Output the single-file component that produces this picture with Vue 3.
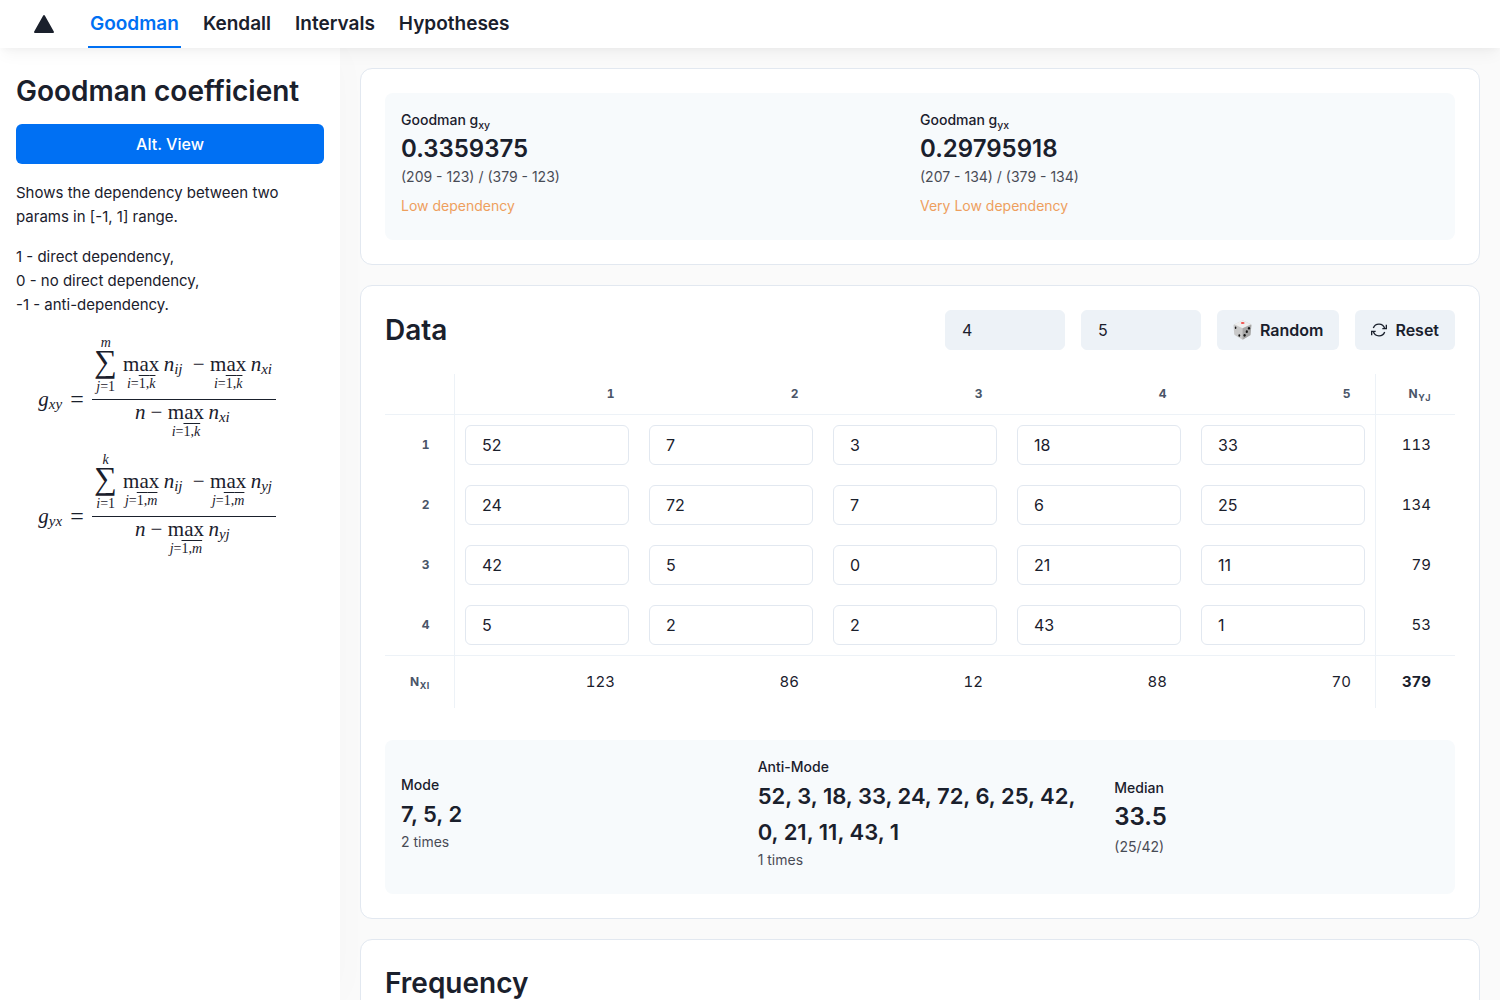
<script setup>
import { computed, ref } from 'vue'

const links = ['Goodman', 'Kendall', 'Intervals', 'Hypotheses']
const active = ref('Goodman')

const formulas = [
  { sub: 'xy', top: 'm', sumVar: 'j', limVar: 'i', limTo: 'k', last: 'xi' },
  { sub: 'yx', top: 'k', sumVar: 'i', limVar: 'j', limTo: 'm', last: 'yj' },
]

const rowCount = ref(4)
const colCount = ref(5)
const cells = ref([
  [52, 7, 3, 18, 33],
  [24, 72, 7, 6, 25],
  [42, 5, 0, 21, 11],
  [5, 2, 2, 43, 1],
])

const sum = (list) => list.reduce((a, b) => a + Number(b), 0)
const rowSums = computed(() => cells.value.map(sum))
const colSums = computed(() => cells.value[0].map((_, c) => sum(cells.value.map((r) => r[c]))))
const total = computed(() => sum(rowSums.value))

const coefficients = [
  { sub: 'xy', value: '0.3359375', calc: '(209 - 123) / (379 - 123)', note: 'Low dependency' },
  { sub: 'yx', value: '0.29795918', calc: '(207 - 134) / (379 - 134)', note: 'Very Low dependency' },
]
</script>

<template>
  <div class="app">
    <header class="topbar">
      <a class="logo" href="#" aria-label="Home">
        <svg width="20" height="18" viewBox="0 0 20 18" aria-hidden="true">
          <path d="M9.200.600a.9.900 0 0 1 1.600 0l9 16c.4.700 0 1.400-.8 1.400H1c-.8 0-1.200-.7-.8-1.400z" fill="currentColor" />
        </svg>
      </a>
      <nav class="nav">
        <a v-for="l in links" :key="l" href="#" class="nav-link" :class="{ active: l === active }" @click.prevent="active = l">{{ l }}</a>
      </nav>
    </header>

    <div class="body">
      <aside class="sidebar">
        <h1 class="title">Goodman coefficient</h1>
        <button class="btn primary" type="button">Alt. View</button>
        <div class="about">
          <p>Shows the dependency between two params in [-1, 1] range.</p>
          <p>1 - direct dependency,<br />0 - no direct dependency,<br />-1 - anti-dependency.</p>
        </div>

        <div class="formulas">
          <div v-for="f in formulas" :key="f.sub" class="formula">
            <div class="lhs"><i>g</i><sub><i>{{ f.sub }}</i></sub></div>
            <div class="eq">=</div>
            <div class="fraction">
              <div class="part numerator">
                <div class="sum">
                  <i class="limit upper">{{ f.top }}</i>
                  <span class="sigma">∑</span>
                  <span class="limit"><i>{{ f.sumVar }}</i>=1</span>
                </div>
                <div class="max"><span>max</span><span class="limit"><i>{{ f.limVar }}</i>=<span class="over">1,<i>{{ f.limTo }}</i></span></span></div>
                <div class="term"><i>n</i><sub><i>ij</i></sub></div>
                <div class="minus">−</div>
                <div class="max"><span>max</span><span class="limit"><i>{{ f.limVar }}</i>=<span class="over">1,<i>{{ f.limTo }}</i></span></span></div>
                <div class="term"><i>n</i><sub><i>{{ f.last }}</i></sub></div>
              </div>
              <div class="part denominator">
                <i>n</i>
                <div class="minus">−</div>
                <div class="max"><span>max</span><span class="limit"><i>{{ f.limVar }}</i>=<span class="over">1,<i>{{ f.limTo }}</i></span></span></div>
                <div class="term"><i>n</i><sub><i>{{ f.last }}</i></sub></div>
              </div>
            </div>
          </div>
        </div>
      </aside>

      <main class="main">
        <section class="card">
          <div class="panel pair">
            <div v-for="c in coefficients" :key="c.sub" class="stat">
              <div class="label">Goodman g<sub>{{ c.sub }}</sub></div>
              <div class="value">{{ c.value }}</div>
              <div class="help">{{ c.calc }}</div>
              <div class="help warn">{{ c.note }}</div>
            </div>
          </div>
        </section>

        <section class="card">
          <div class="card-head">
            <h2 class="title">Data</h2>
            <div class="controls">
              <input v-model="rowCount" class="filled" type="text" inputmode="numeric" aria-label="Rows" />
              <input v-model="colCount" class="filled" type="text" inputmode="numeric" aria-label="Columns" />
              <button class="btn" type="button">
                <svg width="19" height="20" viewBox="0 0 19 20" aria-hidden="true">
                  <path d="M1.5 4.2 9 .7q.8-.3 1.6 0l7 3.3q.9.5.8 1.4l-.9 9q-.1.8-.8 1.2l-6.3 3.7q-.8.5-1.6 0l-6.8-4.1q-.7-.5-.8-1.3L.5 5.600q0-1 1-1.400z" fill="#c9c9c9" />
                  <path d="M1.2 4.3 9 .7q.8-.3 1.6 0l7.2 3.500L9.600 8.200z" fill="#eeeeee" />
                  <path d="m18.4 4.8-.9 9.600q-.1.8-.8 1.200L10.400 19.300q-.4.2-.8.2V8.200z" fill="#a6a6a6" />
                  <ellipse cx="9.700" cy="3" rx="1.900" ry="1" fill="#f0504c" />
                  <g fill="#151515">
                    <ellipse cx="2.600" cy="7.700" rx=".8" ry="1.200" />
                    <ellipse cx="6.300" cy="15.500" rx=".9" ry="1.300" />
                    <ellipse cx="16" cy="8.300" rx="1.100" ry="1.400" />
                    <ellipse cx="13.800" cy="11.700" rx="1.100" ry="1.400" />
                    <ellipse cx="11.600" cy="15.300" rx="1.100" ry="1.400" />
                  </g>
                </svg>
                Random
              </button>
              <button class="btn" type="button">
                <svg width="16" height="16" viewBox="0 0 24 24" fill="none" stroke="currentColor" stroke-width="2" aria-hidden="true">
                  <path d="M23 4v6h-6M1 20v-6h6" />
                  <path d="M3.500 9A9 9 0 0 1 20.500 9.500M3.500 14.500A9 9 0 0 0 20.500 15" />
                </svg>
                Reset
              </button>
            </div>
          </div>

          <table class="grid">
            <colgroup>
              <col class="col-head" />
              <col v-for="c in 5" :key="c" />
              <col class="col-total" />
            </colgroup>
            <thead>
              <tr>
                <th></th>
                <th v-for="c in 5" :key="c" scope="col">{{ c }}</th>
                <th scope="col">N<sub>yj</sub></th>
              </tr>
            </thead>
            <tbody>
              <tr v-for="(row, r) in cells" :key="r">
                <th scope="row">{{ r + 1 }}</th>
                <td v-for="(_, c) in row" :key="c" class="cell">
                  <input v-model="cells[r][c]" type="text" inputmode="numeric" :aria-label="`Row ${r + 1}, column ${c + 1}`" />
                </td>
                <td>{{ rowSums[r] }}</td>
              </tr>
            </tbody>
            <tfoot>
              <tr>
                <th scope="row">N<sub>xi</sub></th>
                <td v-for="(s, c) in colSums" :key="c">{{ s }}</td>
                <td class="total">{{ total }}</td>
              </tr>
            </tfoot>
          </table>

          <div class="panel triple">
            <div class="stat">
              <div class="label">Mode</div>
              <div class="value list">7, 5, 2</div>
              <div class="help">2 times</div>
            </div>
            <div class="stat">
              <div class="label">Anti-Mode</div>
              <div class="value list">52, 3, 18, 33, 24, 72, 6, 25, 42, 0, 21, 11, 43, 1</div>
              <div class="help">1 times</div>
            </div>
            <div class="stat median">
              <div class="label">Median</div>
              <div class="value">33.5</div>
              <div class="help">(25/42)</div>
            </div>
          </div>
        </section>

        <section class="card">
          <h2 class="title">Frequency</h2>
        </section>
      </main>
    </div>
  </div>
</template>

<style>
body {
  margin: 0;
  background: #fafafa;
}
</style>

<style scoped>
* {
  box-sizing: border-box;
}

.app {
  display: flex;
  flex-direction: column;
  height: 100vh;
  color: #1a202c;
  font: 16px/24px Inter, "Liberation Sans", sans-serif;
}

.topbar {
  position: relative;
  z-index: 2;
  display: flex;
  flex: none;
  gap: 32px;
  height: 48px;
  padding-left: 34px;
  background: #fff;
  box-shadow: 0 10px 15px -3px rgba(0, 0, 0, 0.04), 0 4px 6px -2px rgba(0, 0, 0, 0.03);
}

.logo {
  display: flex;
  align-items: center;
  width: 22px;
  color: #1a202c;
}

.nav {
  display: flex;
  gap: 20px;
}

.nav-link {
  padding: 0 2px;
  border-bottom: 2px solid transparent;
  color: inherit;
  font-size: 19px;
  font-weight: 600;
  line-height: 48px;
  text-decoration: none;
}

.nav-link.active {
  border-color: #0070f3;
  color: #0070f3;
}

.body {
  display: flex;
  flex: 1;
  min-height: 0;
}

.sidebar {
  flex: none;
  width: 340px;
  padding: 24px 16px;
  background: #fff;
  box-shadow: 0 0 40px rgba(0, 0, 0, 0.02);
}

.about {
  display: grid;
  gap: 16px;
  padding-top: 17px;
  font-size: 15px;
}

.about p {
  margin: 0;
}

.title {
  margin: 0;
  font-size: 28px;
  font-weight: 600;
  line-height: 38px;
}

.btn {
  display: flex;
  align-items: center;
  justify-content: center;
  gap: 8px;
  height: 40px;
  padding: 0 16px 1px;
  border: 0;
  border-radius: 6px;
  background: #edf2f7;
  color: inherit;
  font: inherit;
  font-weight: 600;
}

.btn.primary {
  width: 100%;
  margin-top: 14px;
  background: #0070f3;
  color: #fff;
  font-weight: 500;
}

.main {
  display: flex;
  flex: 1;
  flex-direction: column;
  gap: 20px;
  min-width: 0;
  padding: 20px;
  overflow-y: auto;
  scrollbar-width: none;
}

.card {
  flex: none;
  padding: 24px;
  border: 1px solid #e2e8f0;
  border-radius: 12px;
  background: #fff;
}

.panel {
  display: grid;
  align-items: center;
  border-radius: 8px;
  background: #f7fafc;
}

.pair {
  grid-template-columns: 1fr 1fr;
  padding: 16px;
}

.triple {
  grid-template-columns: 1fr 1fr 1fr;
  margin-top: 32px;
}

.triple .stat {
  padding: 16px;
}

.label {
  font-size: 14px;
  font-weight: 500;
  line-height: 22px;
}

sub {
  font-size: 75%;
  line-height: 0;
}

.value {
  font-size: 24px;
  font-weight: 600;
  line-height: 36px;
}

.value.list {
  font-size: 22px;
}

.help {
  margin-bottom: 8px;
  font-size: 14px;
  line-height: 20px;
  opacity: 0.8;
}

.help.warn {
  margin: 9px 0 8px;
  color: #ed8936;
}

.median .help {
  margin: 2px 0 0;
}

.card-head {
  display: flex;
  align-items: center;
  justify-content: space-between;
}

.controls {
  display: flex;
  gap: 16px;
}

input {
  width: 100%;
  height: 40px;
  padding: 0 16px;
  border: 1px solid #e2e8f0;
  border-radius: 6px;
  background: #fff;
  color: inherit;
  font: 16px/24px Inter, "Liberation Sans", sans-serif;
}

.filled {
  width: 120px;
  border-color: #edf2f7;
  background: #edf2f7;
}

.grid {
  width: 100%;
  margin-top: 24px;
  border-collapse: separate;
  border-spacing: 0;
  table-layout: fixed;
  font-variant-numeric: lining-nums tabular-nums;
}

.col-head {
  width: 70px;
}

.col-total {
  width: 80px;
}

.grid th,
.grid td {
  height: 60px;
  padding: 0 24px;
  font-size: 15px;
  text-align: right;
}

.grid th {
  color: #4a5568;
  font-size: 12px;
  font-weight: 700;
  letter-spacing: 0.05em;
  line-height: 16px;
  text-transform: uppercase;
}

.grid thead th {
  height: 41px;
  border-bottom: 1px solid #edf2f7;
}

.grid th:first-child {
  border-right: 1px solid #edf2f7;
}

.grid tr > :last-child {
  border-left: 1px solid #edf2f7;
}

.grid tbody tr:last-child > * {
  height: 61px;
  border-bottom: 1px solid #edf2f7;
}

.grid tfoot th,
.grid tfoot td {
  height: 52px;
}

.grid .cell {
  padding: 0 10px;
}

.grid .total {
  font-weight: 700;
}

.formulas {
  display: flex;
  flex-direction: column;
  gap: 16px;
  margin-top: 21px;
}

.formula {
  display: flex;
  align-items: center;
  justify-content: center;
  width: 282px;
  font: 21px/20px "Liberation Serif", serif;
}

.formula sub {
  font-size: 15px;
  vertical-align: -3px;
}

.lhs {
  padding-top: 20px;
}

.eq {
  padding: 20px 8px 0;
  font-size: 24px;
}

.part {
  display: flex;
  align-items: flex-start;
  justify-content: center;
  gap: 4px;
}

.numerator {
  height: 62px;
  padding: 0 1px;
  border-bottom: 1px solid #1a202c;
}

.numerator > :not(.sum) {
  margin-top: 16px;
}

.denominator {
  padding-top: 2px;
}

.minus {
  width: 14px;
  text-align: center;
}

.term {
  width: 24px;
}

.sum,
.max {
  display: flex;
  flex-direction: column;
  align-items: center;
}

.sum {
  width: 26px;
}

.max {
  width: 37px;
}

.sigma {
  margin-bottom: 5px;
  font-size: 32px;
  line-height: 28px;
}

.limit {
  font-size: 14px;
  line-height: 14px;
  white-space: nowrap;
}

.limit.upper {
  line-height: 9px;
}

.max .limit {
  margin-top: 3px;
}

.over {
  text-decoration: overline;
}
</style>
